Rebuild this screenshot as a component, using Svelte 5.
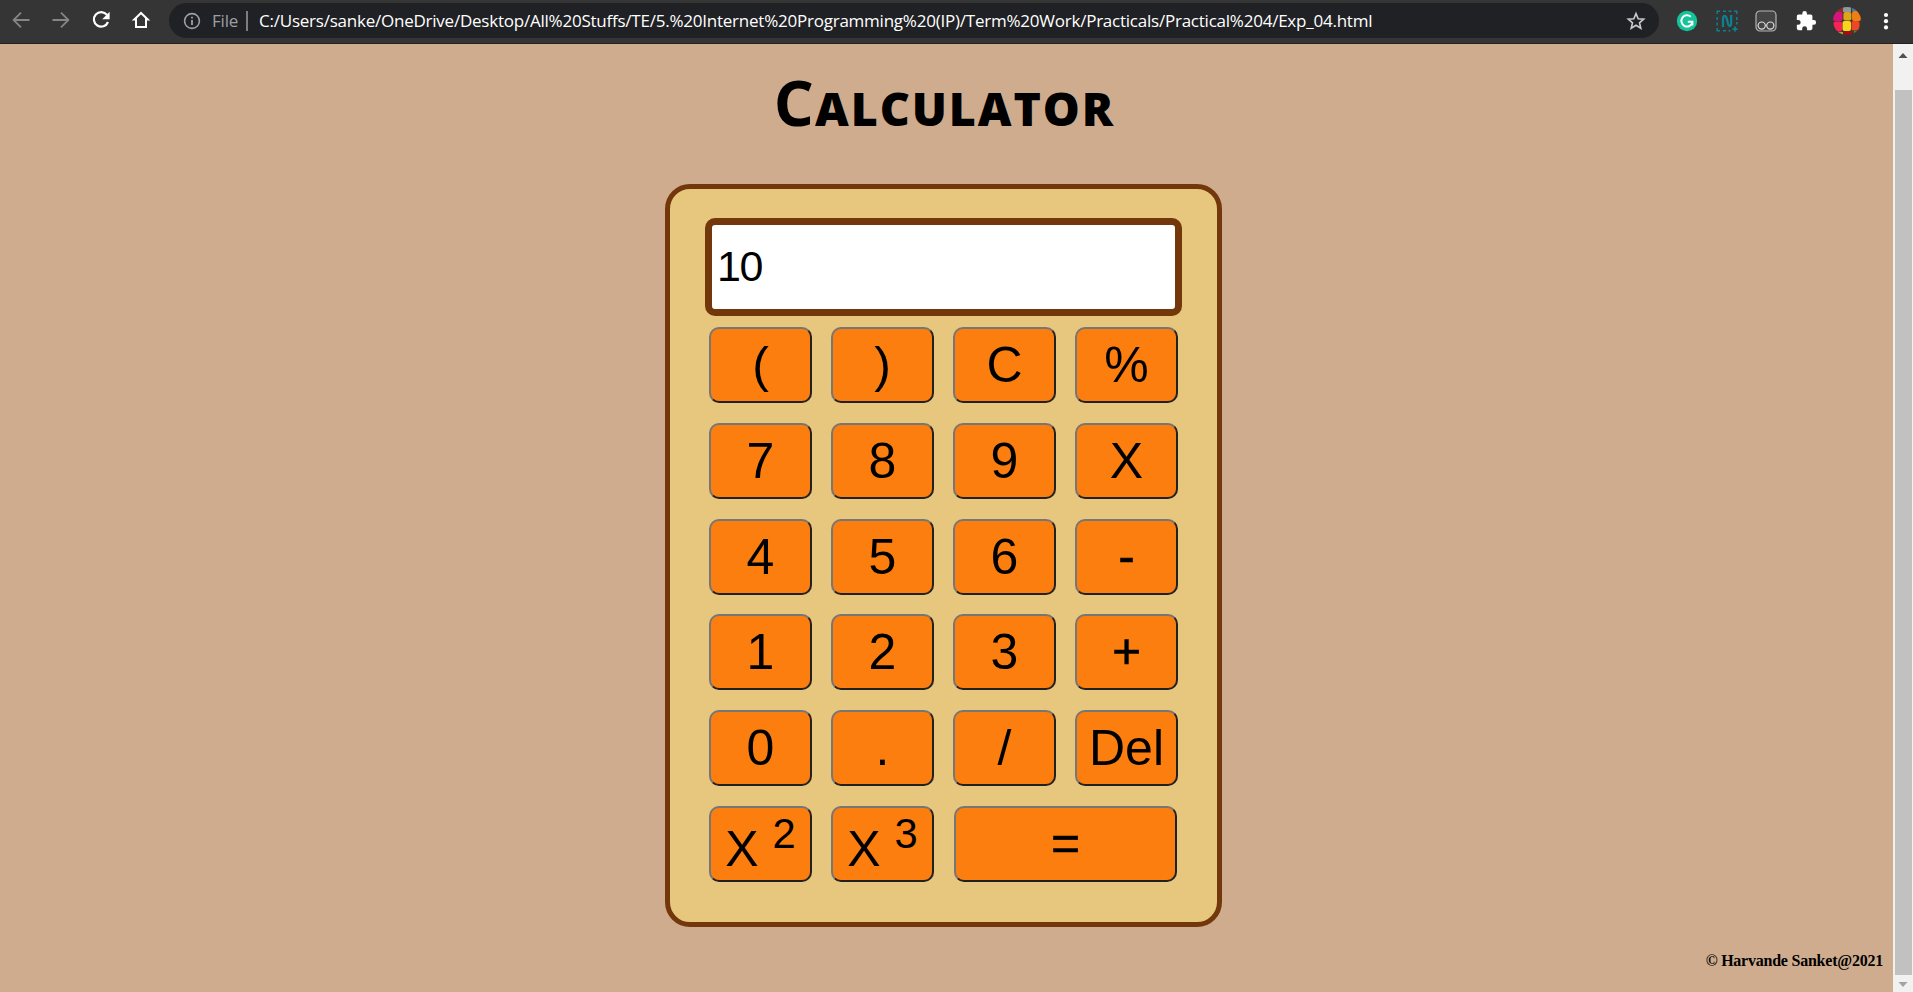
<script>
  const keys = ['(', ')', 'C', '%', '7', '8', '9', 'X', '4', '5', '6', '-', '1', '2', '3', '+', '0', '.', '/', 'Del'];
  const path = 'C:/Users/sanke/OneDrive/Desktop/All%20Stuffs/TE/5.%20Internet%20Programming%20(IP)/Term%20Work/Practicals/Practical%204/Exp_04.html';
</script>

<div class="window">
  <header class="toolbar">
    <nav>
      <svg width="20" height="20" viewBox="0 0 20 20" fill="none" stroke="#868686" stroke-width="1.8"><path d="M18.5 10H3M10 2.6 2.6 10l7.4 7.4" /></svg>
      <svg width="20" height="20" viewBox="0 0 20 20" fill="none" stroke="#868686" stroke-width="1.8"><path d="M1.5 10H17M10 2.6l7.4 7.4-7.4 7.4" /></svg>
      <svg width="20" height="20" viewBox="0 0 20 20" fill="none" stroke="#fff" stroke-width="2.2"><path d="M16 4.9A7.3 7.3 0 1 0 17 12" /><path d="M18.6 1.8v7.4h-7.4z" fill="#fff" stroke="none" /></svg>
      <svg width="20" height="20" viewBox="0 0 20 20" fill="none" stroke="#fff" stroke-width="2"><path d="M10 3 3.2 9.6H5V17h10V9.6h1.8z" /></svg>
    </nav>
    <div class="address">
      <svg width="18" height="18" viewBox="0 0 18 18" fill="none" stroke="#9aa0a6" stroke-width="1.6"><circle cx="9" cy="9" r="7.4" /><path d="M9 8v5M9 4.8v1.8" stroke-width="1.8" /></svg>
      <span class="scheme">File</span>
      <i></i>
      <span class="path">{path}</span>
      <svg class="star" width="20" height="20" viewBox="0 0 20 20" fill="none" stroke="#c8cacd" stroke-width="1.6"><path d="m10 2.6 2.2 5.1 5.5.5-4.2 3.6 1.3 5.4-4.8-2.9-4.8 2.9 1.3-5.4-4.2-3.6 5.5-.5z" /></svg>
    </div>
    <div class="extensions">
      <svg width="22" height="22" viewBox="0 0 22 22" fill="none"><circle cx="11" cy="11" r="10.2" fill="#15c39a" /><path d="M14.8 6.800A5.600 5.600 0 1 0 16.200 13M11.800 11.800h4.600v3.800" stroke="#fff" stroke-width="2" /></svg>
      <svg width="22" height="22" viewBox="0 0 22 22" fill="none" stroke="#0c8090" stroke-width="1.500"><path d="M1.200 4V1.200H4M7 1.200h3M12.500 1.200h3M18 1.200h2.800V4M1.200 7v3M1.200 12.500v3M1.200 18v2.800H4M7 20.800h3M12.500 20.800h2M20.800 7v3M20.800 12v2.500" /><path d="M7 17V9.500C7 5 9.500 5 10.600 8l1.500 6c1 3 3 2.500 3-1V5" stroke-width="2.300" /><path d="M19 16.600v5M16.500 19.100h5" stroke-width="1.900" /></svg>
      <svg width="22" height="22" viewBox="0 0 22 22" fill="#454545" stroke="#b4b4b4" stroke-width="1.200"><rect x="1" y="1" width="20" height="20" rx="4" /><circle cx="6.700" cy="15.600" r="3.600" stroke="#ddd" /><circle cx="15.300" cy="15.600" r="3.600" stroke="#ddd" /></svg>
      <svg width="22" height="22" viewBox="0 0 24 24" fill="#fff"><path d="M20.500 11H19V7c0-1.100-.9-2-2-2h-4V3.500a2.500 2.500 0 0 0-5 0V5H4c-1.100 0-2 .9-2 2v3.800h1.500a2.700 2.700 0 0 1 0 5.400H2V20c0 1.100.9 2 2 2h3.800v-1.500a2.700 2.700 0 0 1 5.400 0V22H17c1.100 0 2-.9 2-2v-4h1.500a2.500 2.500 0 0 0 0-5z" /></svg>
      <svg class="avatar" width="28" height="28" viewBox="0 0 28 28">
        <defs><clipPath id="face"><circle cx="14" cy="14" r="14" /></clipPath></defs>
        <g clip-path="url(#face)">
          <rect width="28" height="28" fill="#4c3520" />
          <path d="M3 0h7v6H3z" fill="#8b2c2c" /><path d="M10 0h8v5h-8z" fill="#8b9aa2" /><path d="M19 0h6v4h-6z" fill="#3978b9" />
          <rect x="0" y="5" width="9.500" height="9" rx="2" fill="#d6147d" /><rect x="10.400" y="5" width="8" height="8.500" rx="2" fill="#dba619" /><rect x="19" y="4" width="9" height="10" rx="2" fill="#ee7d13" />
          <rect x="0.500" y="14.500" width="8.500" height="10" rx="2" fill="#f52455" /><rect x="9.500" y="14" width="8.500" height="10" rx="2" fill="#f8d51c" /><rect x="18.500" y="14" width="8" height="9.500" rx="2" fill="#ee4628" />
          <path d="M4 25h6v3H4z" fill="#9da536" /><rect x="10.500" y="24.500" width="9" height="5" rx="2" fill="#a60a16" /><path d="M21 24h5v4h-5z" fill="#388861" />
        </g>
      </svg>
      <svg width="6" height="20" viewBox="0 0 6 20" fill="#fff"><circle cx="3" cy="4" r="2.100" /><circle cx="3" cy="10.200" r="2.100" /><circle cx="3" cy="16.400" r="2.100" /></svg>
    </div>
  </header>

  <div class="viewport">
    <main>
      <h1>C<span>alculator</span></h1>
      <section class="calculator">
        <div class="display">10</div>
        <div class="keys">
          {#each keys as key}
            <button class:operator={key === '+' || key === '-'}>{key}</button>
          {/each}
          <button>X <sup>2</sup></button>
          <button>X <sup>3</sup></button>
          <button class="operator equals">=</button>
        </div>
      </section>
      <footer>© Harvande Sanket@2021</footer>
    </main>
    <aside class="scrollbar">
      <svg width="20" height="20" viewBox="0 0 20 20"><path d="M5.500 14 10 9l4.500 5z" fill="#505050" /></svg>
      <div class="thumb"></div>
      <svg width="20" height="17" viewBox="0 0 20 17"><path d="M5.500 7 10 12l4.500-5z" fill="#a3a3a3" /></svg>
    </aside>
  </div>
</div>

<style>
  :global(body) { margin: 0; overflow: hidden; }
  .window { width: 1913px; height: 992px; display: flex; flex-direction: column; overflow: hidden; }
  svg { display: block; flex: none; }
  .toolbar { height: 44px; box-sizing: border-box; border-bottom: 1px solid #222; background: #353535; display: flex; align-items: flex-start; }
  nav { width: 169px; height: 40px; padding-left: 11px; box-sizing: border-box; display: flex; align-items: center; gap: 20px; }
  .address { width: 1490px; height: 35px; margin-top: 3px; box-sizing: border-box; padding: 0 13px 0 14px; border-radius: 18px; background: #202124; display: flex; align-items: center; font: 17px/35px "Open Sans", sans-serif; color: #fff; white-space: pre; }
  .scheme { width: 34px; margin-left: 11px; color: #9aa0a6; letter-spacing: -0.200px; }
  .address i { width: 2px; height: 20px; background: #7b7d80; }
  .path { margin-left: 11px; letter-spacing: -0.230px; }
  .star { margin-left: auto; }
  .extensions { height: 41px; padding-left: 17px; display: flex; align-items: center; gap: 17.700px; }
  .avatar { margin: 0 5px 0 -2px; }
  .viewport { flex: 1; display: flex; min-height: 0; }
  main { width: 1893px; background: #cfac8d; display: flex; flex-direction: column; align-items: center; }
  h1 { margin: 18px 0 0; height: 122px; padding-right: 4px; font: 700 63px/80px "Open Sans", sans-serif; letter-spacing: 1px; color: #000; text-transform: uppercase; }
  h1 span { font-size: 46.500px; font-weight: 800; letter-spacing: 1.900px; }
  .calculator { width: 557px; height: 743px; box-sizing: border-box; border: 5px solid #72370a; border-radius: 25px; background: #e7c67d; padding: 29px 35px; margin-right: 6px; }
  .display { height: 98px; box-sizing: border-box; border: 7px solid #72370a; border-radius: 10px; background: #fff; padding-left: 5px; font: 43px/82px "Liberation Sans", Arial, sans-serif; letter-spacing: -1.500px; color: #000; }
  .keys { margin: 11px 4px 0; display: grid; grid-template-columns: repeat(4, 103px); grid-auto-rows: 76px; gap: 19.800px 19px; }
  button { box-sizing: border-box; margin: 0; padding: 0; border: 2px solid; border-color: #767676 #212121 #212121 #767676; border-radius: 10px; background: #fb7e0f; color: #000; font: 50px "Liberation Sans", Arial, sans-serif; white-space: nowrap; }
  .operator { padding-bottom: 2px; -webkit-text-stroke: 0.500px #000; }
  .equals { grid-column: span 2; margin: 0 1px; }
  footer { align-self: flex-end; margin: 24px 10px 0 0; font: 700 16px/20px "Liberation Serif", "Times New Roman", serif; letter-spacing: -0.230px; color: #000; }
  .scrollbar { width: 20px; background: #f1f1f1; display: flex; flex-direction: column; }
  .thumb { flex: 1; margin: 26px 1px 0 2px; background: #c1c1c1; }
</style>
